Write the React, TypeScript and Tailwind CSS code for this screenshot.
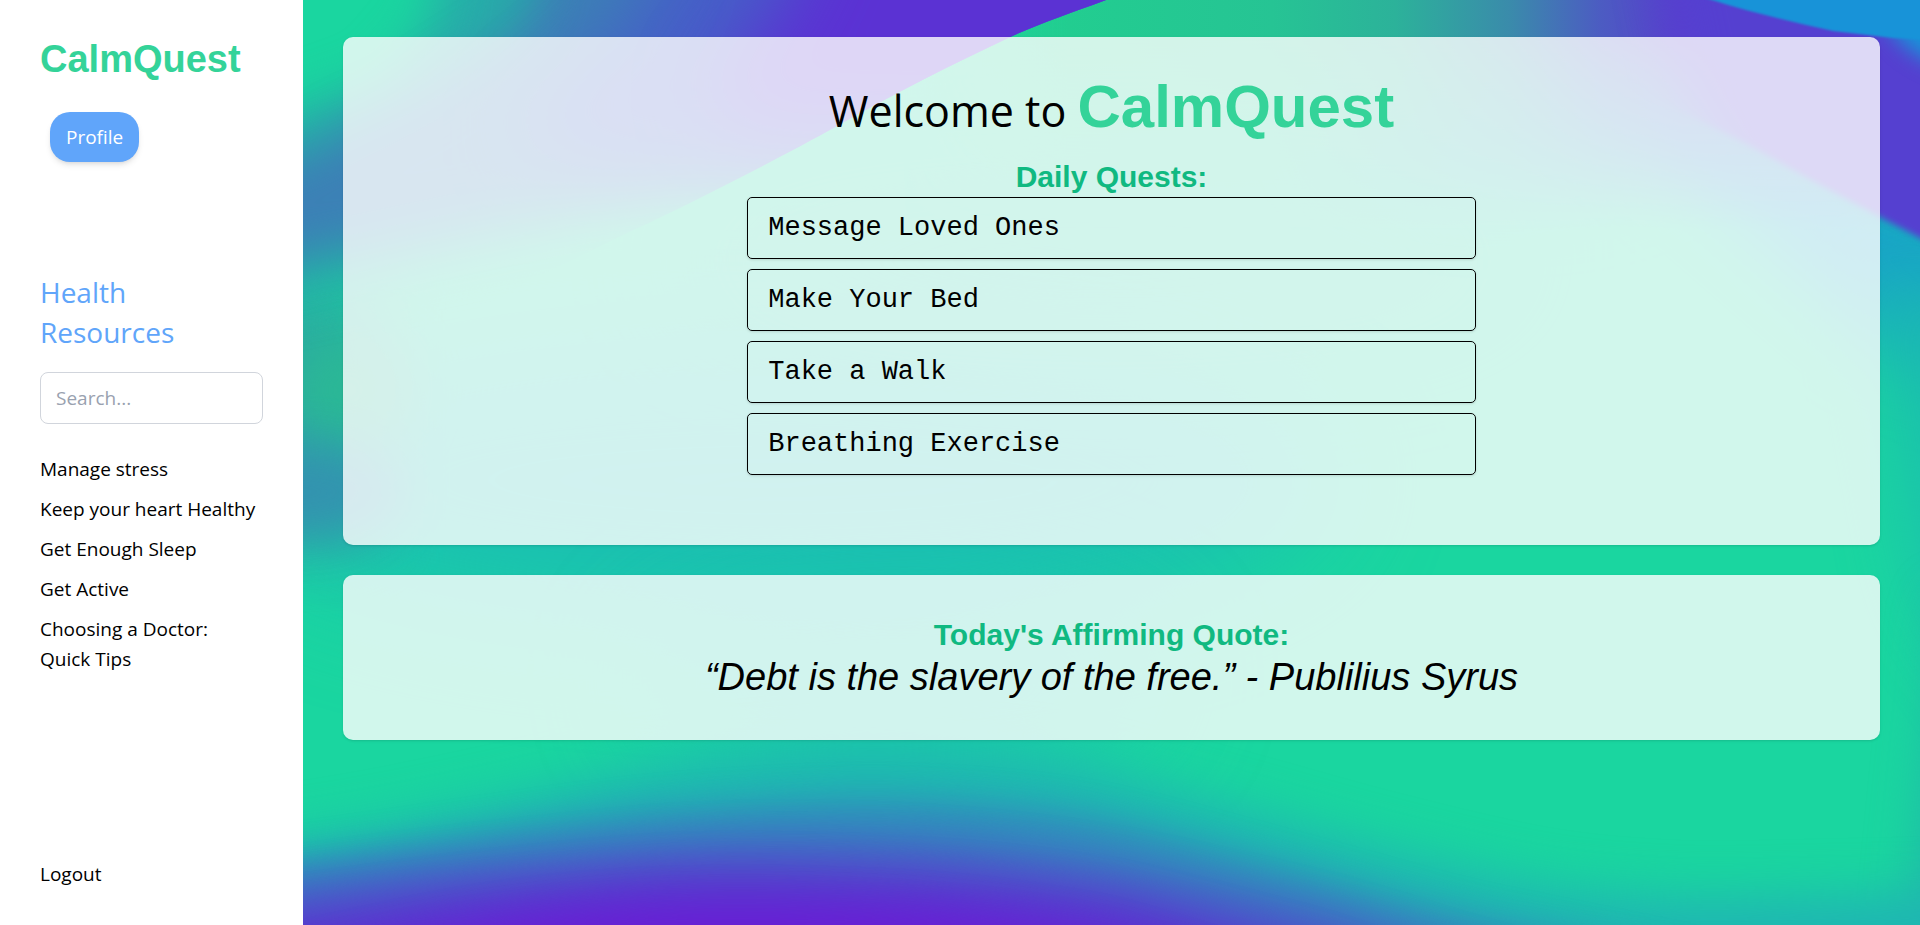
const resources = [
  'Manage stress',
  'Keep your heart Healthy',
  'Get Enough Sleep',
  'Get Active',
  'Choosing a Doctor: Quick Tips',
];

const quests = ['Message Loved Ones', 'Make Your Bed', 'Take a Walk', 'Breathing Exercise'];

const blurs = [1, 3, 10, 16, 24, 36, 60];

function Backdrop() {
  return (
    <svg
      className="absolute inset-0 h-full w-full"
      viewBox="0 0 1617 925"
      preserveAspectRatio="none"
      aria-hidden="true"
    >
      <defs>
        {blurs.map((size) => (
          <filter
            key={size}
            id={`blur${size}`}
            filterUnits="userSpaceOnUse"
            x="-300"
            y="-300"
            width="2220"
            height="1500"
            colorInterpolationFilters="sRGB"
          >
            <feGaussianBlur stdDeviation={size} />
          </filter>
        ))}
        <linearGradient id="top" gradientUnits="userSpaceOnUse" x1="600" y1="0" x2="1420" y2="0">
          <stop offset="0" stopColor="#22cd90" stopOpacity="0" />
          <stop offset="0.2" stopColor="#22cd90" />
          <stop offset="0.45" stopColor="#26c494" />
          <stop offset="0.6" stopColor="#2cb29a" />
          <stop offset="0.74" stopColor="#3a8bab" />
          <stop offset="0.85" stopColor="#4c5cc2" />
          <stop offset="0.95" stopColor="#583fcd" />
          <stop offset="1" stopColor="#563fd2" />
        </linearGradient>
        <linearGradient id="topFade" x1="0" y1="0" x2="0" y2="1">
          <stop offset="0" stopColor="#fff" />
          <stop offset="0.15" stopColor="#fff" />
          <stop offset="1" stopColor="#000" />
        </linearGradient>
        <mask id="topMask" maskUnits="userSpaceOnUse" x="0" y="0" width="1617" height="230">
          <rect width="1617" height="230" fill="url(#topFade)" />
        </mask>
        <clipPath id="leftWave">
          <path d="M-10 -10H825L803 0C765 14 735 24 705 38C650 64 590 94 534 126C480 156 410 192 348 222C260 262 180 310 -10 400Z" />
        </clipPath>
        <clipPath id="rightWave">
          <path d="M1100 -60H1800V320L1617 238L1577 217L1510 181L1444 144L1364 104L1250 56L1100 30Z" />
        </clipPath>
      </defs>
      <rect width="1617" height="925" fill="#1ad6a0" />

      <ellipse cx="470" cy="480" rx="560" ry="150" fill="#1bbab6" opacity="0.8" filter="url(#blur60)" />
      <ellipse cx="600" cy="680" rx="260" ry="90" fill="#1bbcb4" opacity="0.5" filter="url(#blur60)" />
      <ellipse cx="800" cy="260" rx="420" ry="90" fill="#22c2a4" opacity="0.6" filter="url(#blur60)" />
      <rect x="-100" y="290" width="170" height="250" fill="#2ea6a2" opacity="0.9" filter="url(#blur36)" />
      <ellipse cx="45" cy="390" rx="60" ry="55" fill="#2bb796" filter="url(#blur24)" />
      <ellipse cx="-10" cy="492" rx="110" ry="45" fill="#358fb2" opacity="0.85" filter="url(#blur24)" />
      <ellipse cx="1200" cy="140" rx="180" ry="60" fill="#1fb5b8" opacity="0.6" filter="url(#blur36)" />
      <path d="M1250 60L1720 230V400L1560 330Z" fill="#18a0ca" filter="url(#blur36)" />
      <path d="M1560 260L1720 300V740L1620 600Z" fill="#1bbbb0" opacity="0.8" filter="url(#blur36)" />
      <path d="M1640 600H1720V1000H1600Z" fill="#1fb8a8" filter="url(#blur24)" />

      <g mask="url(#topMask)">
        <rect x="600" width="1017" height="230" fill="url(#top)" />
      </g>
      <g filter="url(#blur3)">
        <g clipPath="url(#rightWave)">
          <path d="M1350 -80H1760V340H1520L1390 110Z" fill="#5540d0" filter="url(#blur24)" />
        </g>
      </g>
      <path d="M1540 -40L1580 20C1600 50 1620 66 1700 85V-40Z" fill="#1893d8" filter="url(#blur10)" />
      <path d="M1409 0C1450 13 1490 22 1530 31L1590 38L1700 44V-10H1376Z" fill="#1893d8" filter="url(#blur1)" />

      <g clipPath="url(#leftWave)">
        <path
          d="M-120 150L0 108L80 80L130 20L145 -80H900V200L380 205L200 250L0 292L-120 320Z"
          fill="#27aca9"
          filter="url(#blur24)"
        />
        <path
          d="M-120 195L0 155L110 100L220 30L250 -80H900V175L400 180L200 214L0 256L-120 290Z"
          fill="#3c80b6"
          filter="url(#blur24)"
        />
        <path d="M370 -100L340 0L300 50L220 115L220 145L330 168L900 172V-100Z" fill="#465fc8" filter="url(#blur36)" />
        <path d="M520 -100L480 0L430 60L400 95L450 125L900 135V-100Z" fill="#5b32d3" filter="url(#blur36)" />
      </g>

      <g transform="translate(0 10)">
        <path
          d="M-120 845L0 828C70 818 130 805 200 790S330 758 400 750S540 734 600 737S740 746 800 762S940 800 1000 817S1130 852 1200 867S1330 885 1400 888L1760 880V1100H-120Z"
          fill="#1fb6b2"
          filter="url(#blur24)"
        />
        <path
          d="M-120 860L0 848C70 840 130 830 200 820S330 802 400 797S540 788 600 790S740 797 800 810S940 846 1000 862S1130 900 1200 914S1330 940 1400 955L1760 1000V1100H-120Z"
          fill="#318cbd"
          filter="url(#blur16)"
        />
        <path
          d="M-120 884L0 871C70 862 130 854 200 847S330 832 400 829S540 827 600 830S740 841 800 851S940 880 1000 894S1130 934 1200 952L1500 1040V1100H-120Z"
          fill="#4662c7"
          filter="url(#blur16)"
        />
        <path
          d="M-120 915L0 901C70 892 130 882 200 875S330 860 400 859S540 860 600 863S740 874 800 884S940 918 1000 932L1300 1030V1100H-120Z"
          fill="#5839cf"
          filter="url(#blur16)"
        />
        <path
          d="M-120 970L0 948C70 934 130 918 200 908S330 894 400 893S540 894 600 897S740 910 800 922L1100 1010V1100H-120Z"
          fill="#6720d4"
          filter="url(#blur16)"
        />
      </g>
    </svg>
  );
}

export default function App() {
  return (
    <div className="flex min-h-screen bg-white font-['Open_Sans','Noto_Sans',sans-serif] text-[19px] text-black">
      <aside className="flex w-[303px] shrink-0 flex-col px-10 py-9">
        <h1 className="font-['Liberation_Sans',sans-serif] text-[38px] leading-[46px] font-bold text-[#34d399]">
          CalmQuest
        </h1>
        <button
          type="button"
          className="mt-[30px] ml-[10px] h-[50px] self-start rounded-[20px] bg-[#60a5fa] px-4 text-white shadow-md"
        >
          Profile
        </button>
        <h2 className="mt-[110px] text-[28px] leading-10 text-[#60a5fa]">
          Health
          <br />
          Resources
        </h2>
        <input
          type="search"
          aria-label="Search health resources"
          placeholder="Search..."
          className="mt-5 h-[52px] w-full rounded-lg border border-gray-300 px-[15px] placeholder:text-gray-400"
        />
        <nav className="mt-[30px]" aria-label="Health resources">
          <ul className="flex flex-col gap-[10px] pr-1 leading-[30px]">
            {resources.map((item) => (
              <li key={item}>
                <a href="#">{item}</a>
              </li>
            ))}
          </ul>
        </nav>
        <a href="#" className="mt-auto leading-[30px]">
          Logout
        </a>
      </aside>

      <main className="relative flex-1 overflow-hidden">
        <Backdrop />
        <div className="relative flex flex-col gap-[30px] px-10 py-[37px]">
          <section className="rounded-[10px] bg-white/80 px-10 pt-10 pb-[70px] shadow-sm">
            <h2 className="h-[60px] text-center text-[43px] leading-10">
              Welcome to{' '}
              <span className="font-['Liberation_Sans',sans-serif] text-[60px] leading-[60px] font-bold text-[#34d399]">
                CalmQuest
              </span>
            </h2>
            <h3 className="mt-5 text-center font-['Liberation_Sans',sans-serif] text-[30px] leading-10 font-bold text-[#10b981]">
              Daily Quests:
            </h3>
            <ul className="mx-auto flex w-1/2 flex-col gap-[10px]">
              {quests.map((quest) => (
                <li
                  key={quest}
                  className="flex h-[62px] items-center rounded-[5px] border border-black px-5 font-['Liberation_Mono',monospace] text-[27px] shadow-sm"
                >
                  {quest}
                </li>
              ))}
            </ul>
          </section>
          <section className="rounded-[10px] bg-white/80 p-10 text-center font-['Liberation_Sans',sans-serif] shadow-sm">
            <h3 className="text-[30px] leading-10 font-bold text-[#10b981]">Today's Affirming Quote:</h3>
            <p className="text-[38px] leading-[45px] italic">“Debt is the slavery of the free.” - Publilius Syrus</p>
          </section>
        </div>
      </main>
    </div>
  );
}
